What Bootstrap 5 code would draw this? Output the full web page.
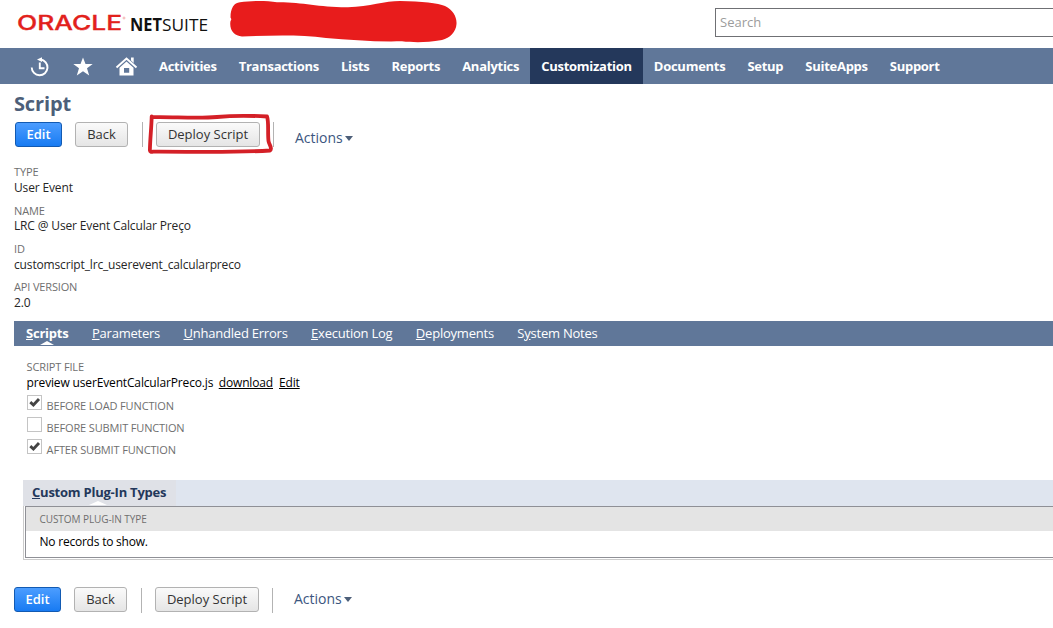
<!DOCTYPE html>
<html lang="en">
<head>
<meta charset="utf-8">
<meta name="viewport" content="width=device-width, initial-scale=1">
<title>Script</title>
<link href="https://cdn.jsdelivr.net/npm/bootstrap@5.3.0/dist/css/bootstrap.min.css" rel="stylesheet">
<script src="https://cdn.jsdelivr.net/npm/bootstrap@5.3.0/dist/js/bootstrap.bundle.min.js"></script>
<style>
  body{font-family:"Open Sans","Noto Sans",sans-serif;font-size:12px;line-height:16px;color:#262626;background:#fff;height:628px;overflow:hidden;letter-spacing:-.15px}
  .topbar{height:48px;padding-left:17px}
  .topbar svg{letter-spacing:0}
  .search-box{width:338px;height:29px;margin-top:8px;border:1px solid #6f7074;border-right:0;border-radius:0;font-size:13px;padding:0 5px 2px 4px}
  .search-box::placeholder{color:#9c9c9c}
  .scribble{margin-left:21px}
  .mainnav{height:36px;background:#607799;padding-left:30px}
  .mainnav .nav-link{height:36px;line-height:36px;padding:0 11px;color:#fff;font-size:13px;font-weight:700;white-space:nowrap;letter-spacing:-.27px}
  .mainnav .nav-link.active{background:#24385b}
  .mainnav svg{margin-top:8px}
  h1{font-size:20px;line-height:26px;font-weight:700;color:#4d5f79;margin:7px 0 0 14px;letter-spacing:-.15px}
  .btn-ns{height:25px;padding:0;font-size:13px;line-height:23px;border-radius:3px;font-weight:600;color:#333;border:1px solid #b2b2b2;background:linear-gradient(#fafafa,#e5e5e5);letter-spacing:0}
  .btn-blue{width:47px;color:#fff;border-color:#125ab2;background:linear-gradient(#4c9dff,#187bf2)}
  .btn-back{width:53px;margin-left:13px;font-weight:500}
  .btn-deploy{width:104px;font-weight:500}
  .rule{width:1px;height:25px;background:#b3b3b3}
  .actions{font-size:14px;line-height:25px;font-weight:500;color:#3c5680;text-decoration:none;letter-spacing:0}
  .caret{display:inline-block;border:4px solid transparent;border-top:5px solid #4d5f79;border-bottom:0;margin:0 0 2px 2.5px}
  .top-actions{margin:5px 0 0 15px;height:43px}
  .top-actions .rule-a{margin:0 13px 0 14px}
  .top-actions .rule-b{margin:0 21px 0 13px}
  .top-actions .actions{margin-top:3px}
  .marker{left:131px;top:-10px}
  .bottom-actions{margin:27px 0 0 14px}
  .bottom-actions .rule-a{margin:1px 13px 0 14px}
  .bottom-actions .rule-b{margin:1px 21px 0 13px}
  .bottom-actions .actions{margin-top:-1px}
  .lbl{font-size:11px;line-height:15px;color:#6f6f6f}
  .fields{margin-left:14px}
  .fld{height:38.4px;display:flow-root}
  .fld .lbl{margin-top:-.8px;margin-bottom:.8px}
  .subtabs{height:25px;background:#607799;margin:2.4px 0 0 14px;padding-left:12px;gap:23.4px}
  .subtabs .nav-link{padding:0;line-height:25px;font-size:13px;color:#fff;white-space:nowrap;position:relative;letter-spacing:-.22px}
  .subtabs .active{font-weight:700}
  .notch::after{content:"";position:absolute;left:50%;bottom:1px;margin-left:-7px;border:7px solid transparent;border-top:0;border-bottom:4px solid #fff}
  .tab-body{margin:13px 0 0 26.6px;height:121px}
  .file-row{height:20px;margin-top:1px}
  .file-row u:first-child{margin:0 3px 0 2.5px}
  .tick{width:15px;height:15px;border:1px solid #c4c4c4;background:#fff}
  .check-row{height:22px}
  .check-row .lbl{margin:3px 0 0 5px}
  .plug-bar{height:26px;margin-left:23px;background:#dfe5ef}
  .plug-tab{width:153px;height:26px;background:#dfe1e7;padding-left:9px;font-size:13px;line-height:25px;font-weight:700;color:#24385b;position:relative;letter-spacing:-.23px}
  .plug-tab::after{content:"";position:absolute;left:66px;bottom:1px;border:9px solid transparent;border-top:0;border-bottom:4px solid #fff}
  .plug-wrap{margin-left:23px;border-left:1px solid #ccc;border-bottom:1px solid #ccc;padding:0 0 1px 1px;height:54px}
  .plug-inner{border:1px solid #8f9096;border-right:0;height:52px}
  .plug-head{height:24px;background:#e4e4e4;padding-left:13.5px;font-size:10px;line-height:25px;color:#6f6f6f;letter-spacing:-.07px}
  .plug-empty{padding:3px 0 0 13.5px;letter-spacing:-.22px}
</style>
</head>
<body>
<header class="topbar d-flex align-items-start">
  <svg width="192" height="48" role="img" aria-label="Oracle NetSuite">
    <text x="0" y="30.3" font-family="Inter" font-weight="500" font-size="19.5" fill="#e2211c" stroke="#e2211c" stroke-width=".3" textLength="105" lengthAdjust="spacingAndGlyphs">ORACLE</text>
    <circle cx="107" cy="18" r="1" fill="none" stroke="#e88" stroke-width=".6"/>
    <text x="113" y="30.500" font-family="Open Sans" font-weight="700" font-size="17" fill="#111" textLength="32" lengthAdjust="spacingAndGlyphs">NET</text>
    <text x="145" y="30.500" font-family="Open Sans" font-size="17" fill="#111" textLength="46" lengthAdjust="spacingAndGlyphs">SUITE</text>
  </svg>
  <svg class="scribble" width="228" height="46" viewBox="230 0 228 46">
    <path fill="#e81c1c" d="M230.500 17.500C230.500 8 234 3 240 2.300C252 .500 267 .700 277 2.300C303 2 318 7.500 348 7.300C370 6.500 385 1 400 1C422 1.500 438 3 445 6C453 10 457 17 456.500 24C456 32 450 38 442 40C425 43 413 42.500 402 41.300C376 42 350 40 326 38C300 34.500 270 35.500 242 36.500C234 36 229 30 230.500 21C231.500 20 231.500 19 230.500 17.500Z"/>
  </svg>
  <input class="search-box form-control ms-auto flex-shrink-0" placeholder="Search">
</header>
<nav class="mainnav d-flex">
  <svg width="118" height="22" viewBox="30 56 118 22" fill="none" class="flex-shrink-0">
    <path d="M40.500 59.500A7.900 7.900 0 1 1 31.700 67.500" stroke="#fff" stroke-width="1.900"/>
    <path d="M37 59.600L42 57.300V62Z" fill="#fff"/>
    <path d="M39.800 62.500V68.300H44.500" stroke="#fff" stroke-width="1.900"/>
    <path d="M83 57.500L85.500 64H92.700L87 68.300L89.200 75.500L83 71.200L76.800 75.500L79 68.300L73.300 64H80.500Z" fill="#fff"/>
    <path d="M116.500 67.500L126.500 58.500L136.500 67.500" stroke="#fff" stroke-width="2"/>
    <path d="M131 57.500H133.700V63L131 60.600Z" fill="#fff"/>
    <path fill-rule="evenodd" d="M119.500 67.800L126.500 61.500L133.500 67.800V75.500H119.500ZM124 68H129.200V72.800H124Z" fill="#fff"/>
  </svg>
  <a class="nav-link">Activities</a><a class="nav-link">Transactions</a><a class="nav-link">Lists</a><a class="nav-link">Reports</a><a class="nav-link">Analytics</a><a class="nav-link active">Customization</a><a class="nav-link">Documents</a><a class="nav-link">Setup</a><a class="nav-link">SuiteApps</a><a class="nav-link">Support</a>
</nav>
<main>
  <h1>Script</h1>
  <div class="top-actions d-flex position-relative">
    <button class="btn btn-ns btn-blue">Edit</button>
    <button class="btn btn-ns btn-back">Back</button>
    <span class="rule rule-a"></span>
    <button class="btn btn-ns btn-deploy">Deploy Script</button>
    <span class="rule rule-b"></span>
    <a class="actions">Actions<i class="caret"></i></a>
    <svg class="marker position-absolute" width="130" height="45" viewBox="146 112 130 45" fill="none">
      <path d="M151.700 116.500C151.500 127 150 140 149.900 150.500Q150 152.500 153 151.700C190 151.500 230 153 270 150.500C273 148 269 145 268.500 141C267.500 133 269 122 267 116.500C250 115.500 232 115.500 217 117C195 119 172 116.500 153 117.200" stroke="#d42027" stroke-width="3.800" stroke-linecap="round" stroke-linejoin="round"/>
    </svg>
  </div>
  <div class="fields">
    <div class="fld"><div class="lbl">TYPE</div><div>User Event</div></div>
    <div class="fld"><div class="lbl">NAME</div><div>LRC @ User Event Calcular Preço</div></div>
    <div class="fld"><div class="lbl">ID</div><div>customscript_lrc_userevent_calcularpreco</div></div>
    <div class="fld"><div class="lbl">API VERSION</div><div>2.0</div></div>
  </div>
  <nav class="subtabs d-flex">
    <a class="nav-link active notch"><u>S</u>cripts</a><a class="nav-link"><u>P</u>arameters</a><a class="nav-link"><u>U</u>nhandled Errors</a><a class="nav-link"><u>E</u>xecution Log</a><a class="nav-link"><u>D</u>eployments</a><a class="nav-link">S<u>y</u>stem Notes</a>
  </nav>
  <section class="tab-body">
    <div class="lbl">SCRIPT FILE</div>
    <div class="file-row text-black">preview userEventCalcularPreco.js <u>download</u> <u>Edit</u></div>
    <div class="check-row d-flex"><span class="tick"><svg class="d-block" width="13" height="13"><path d="M2.300 6.200L5.400 9L11 3" stroke="#444" stroke-width="2.900" fill="none"/></svg></span><span class="lbl">BEFORE LOAD FUNCTION</span></div>
    <div class="check-row d-flex"><span class="tick"></span><span class="lbl">BEFORE SUBMIT FUNCTION</span></div>
    <div class="check-row d-flex"><span class="tick"><svg class="d-block" width="13" height="13"><path d="M2.300 6.200L5.400 9L11 3" stroke="#444" stroke-width="2.900" fill="none"/></svg></span><span class="lbl">AFTER SUBMIT FUNCTION</span></div>
  </section>
  <div class="plug-bar"><div class="plug-tab"><u>C</u>ustom Plug-In Types</div></div>
  <div class="plug-wrap"><div class="plug-inner"><div class="plug-head">CUSTOM PLUG-IN TYPE</div><div class="plug-empty text-black">No records to show.</div></div></div>
  <div class="bottom-actions d-flex">
    <button class="btn btn-ns btn-blue">Edit</button>
    <button class="btn btn-ns btn-back">Back</button>
    <span class="rule rule-a"></span>
    <button class="btn btn-ns btn-deploy">Deploy Script</button>
    <span class="rule rule-b"></span>
    <a class="actions">Actions<i class="caret"></i></a>
  </div>
</main>
</body>
</html>
